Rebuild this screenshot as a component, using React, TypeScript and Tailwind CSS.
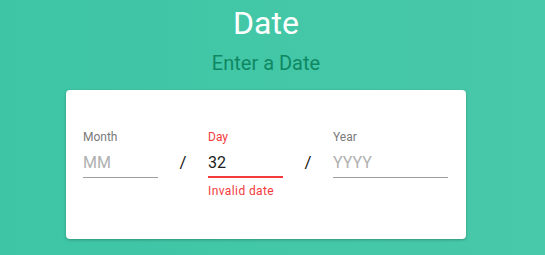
const Field = ({
  label,
  value,
  placeholder,
  width,
  error,
}: {
  label: string;
  value?: string;
  placeholder: string;
  width: string;
  error?: string;
}) => (
  <div className={`flex flex-col ${width}`}>
    <span className={`text-[12px] leading-[14px] ${error ? 'text-[#f33a3d]' : 'text-[#7a7a7a]'}`}>{label}</span>
    <div
      className={`mt-[9px] text-[16px] leading-[20px] ${
        error ? 'h-[25px] border-b-2 border-[#f33a3d] text-[#212121]' : 'h-[25px] border-b border-[#9e9e9e] text-[#b0b0b0]'
      }`}
    >
      {value ?? placeholder}
    </div>
    {error && <span className="mt-[6px] text-[12px] leading-[14px] tracking-[0.4px] text-[#f33a3d]">{error}</span>}
  </div>
);

const Slash = () => <div className="w-[50px] pt-[22px] text-center text-[17px] leading-[20px] text-[#212121]">/</div>;

export default function App() {
  return (
    <div className="h-[255px] w-[545px] bg-gradient-to-r from-[#3dc5a5] to-[#48c9a9] font-['Roboto',sans-serif]">
      <div className="flex w-[532px] flex-col items-center">
        <h1 className="mt-[4px] text-[32px] leading-[38px] text-white">Date</h1>
        <h2 className="mt-[9px] text-[20px] leading-[24px] text-[#0e8863]">Enter a Date</h2>
        <div className="mt-[15px] h-[149px] w-[400px] rounded-[4px] bg-white px-[17px] pt-[40px] shadow-[0_1px_3px_rgba(0,0,0,0.25)]">
          <div className="flex items-start">
            <Field label="Month" placeholder="MM" width="w-[75px]" />
            <Slash />
            <Field label="Day" placeholder="DD" value="32" width="w-[75px]" error="Invalid date" />
            <Slash />
            <Field label="Year" placeholder="YYYY" width="w-[115px]" />
          </div>
        </div>
      </div>
    </div>
  );
}
